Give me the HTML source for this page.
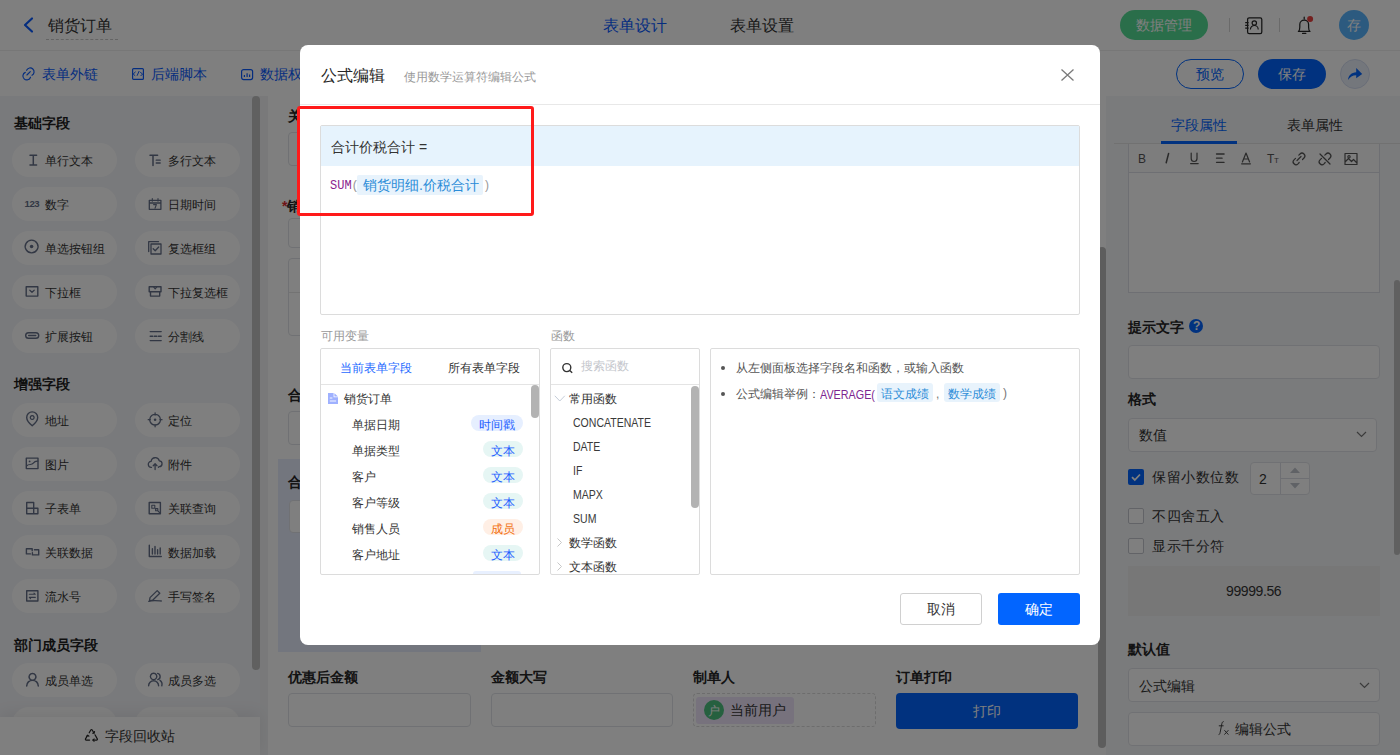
<!DOCTYPE html>
<html><head><meta charset="utf-8">
<style>
*{box-sizing:border-box;margin:0;padding:0}
html,body{width:1400px;height:755px;overflow:hidden;background:#fff;font-family:"Liberation Sans",sans-serif;color:#262626}
.a{position:absolute}
.t{position:absolute;white-space:nowrap}
.f12{font-size:12px;line-height:12px}
.f13{font-size:13px;line-height:13px}
.f14{font-size:14px;line-height:14px}
.f16{font-size:16px;line-height:16px}
.b{font-weight:bold}
svg{position:absolute;overflow:visible}
.pill{position:absolute;width:105px;height:34px;border-radius:17px;background:#fff}
.inp{position:absolute;border:1px solid #e1e3e8;border-radius:4px;background:#fff}
</style></head><body>
<div class="a" style="left:0px;top:0px;width:1400px;height:51px;background:#fff;border-bottom:1px solid #efefef"></div>
<svg style="left:22px;top:17px" width="12" height="16" viewBox="0 0 12 16"><path d="M10 1.5 L3 8 L10 14.5" fill="none" stroke="#0a5bff" stroke-width="2.2" stroke-linecap="round" stroke-linejoin="round"/></svg>
<div class="t f16" style="left:48px;top:18px;color:#333">销货订单</div>
<div class="a" style="left:46px;top:39px;width:72px;height:0px;border-top:1px dashed #c9c9c9"></div>
<div class="t f16" style="left:603px;top:18px;color:#0a5bff">表单设计</div>
<div class="t f16" style="left:730px;top:18px;color:#333">表单设置</div>
<div class="a" style="left:1120px;top:10px;width:88px;height:30px;border-radius:15px;background:#55dc95"></div>
<div class="t f14" style="left:1136px;top:18px;color:#fff">数据管理</div>
<div class="a" style="left:1229px;top:18px;width:1px;height:14px;background:#d4d4d4"></div>
<div class="a" style="left:1279px;top:18px;width:1px;height:14px;background:#d4d4d4"></div>
<svg style="left:1244px;top:16px" width="20" height="20" viewBox="0 0 20 20"><rect x="3.6" y="1.8" width="14.2" height="15.8" rx="1.6" fill="none" stroke="#262626" stroke-width="1.25"/><path d="M1.2 6.6h3.4M1.2 9.4h3.4M1.2 12.2h3.4" stroke="#262626" stroke-width="1.2"/><circle cx="10.3" cy="7" r="2.2" fill="none" stroke="#262626" stroke-width="1.2"/><path d="M6.4 13.4a3.9 3.9 0 0 1 7.8 0" fill="none" stroke="#262626" stroke-width="1.2"/></svg>
<svg style="left:1296px;top:15px" width="20" height="20" viewBox="0 0 20 20"><path d="M2.4 16.4c1.2-1 1.4-2.2 1.4-4.2V9.6a4.4 4.4 0 0 1 8.8 0v2.6c0 2 .2 3.2 1.4 4.2zM6.6 18.4h3.2M8.2 2.2v1.6" fill="none" stroke="#262626" stroke-width="1.25" stroke-linejoin="round" stroke-linecap="round"/><circle cx="14.1" cy="4" r="3" fill="#e8403f"/></svg>
<div class="a" style="left:1339px;top:10px;width:30px;height:30px;border-radius:15px;background:#58b5ff"></div>
<div class="t f14" style="left:1347px;top:18px;color:#fff">存</div>
<div class="a" style="left:0px;top:51px;width:1400px;height:45px;background:#fff"></div>
<div class="t f14" style="left:42px;top:67px;color:#0a5bff">表单外链</div>
<div class="t f14" style="left:151px;top:67px;color:#0a5bff">后端脚本</div>
<div class="t f14" style="left:260px;top:67px;color:#0a5bff">数据权限</div>
<div class="a" style="left:1176px;top:59px;width:68px;height:30px;border-radius:15px;border:1px solid #0265ff;background:#fff"></div>
<div class="t f14" style="left:1196px;top:67px;color:#0265ff">预览</div>
<div class="a" style="left:1258px;top:59px;width:68px;height:30px;border-radius:15px;background:#0265ff"></div>
<div class="t f14" style="left:1278px;top:67px;color:#fff">保存</div>
<div class="a" style="left:1340px;top:59px;width:30px;height:30px;border-radius:15px;border:1px solid #d3dcef;background:#e9eef9"></div>
<svg style="left:1347px;top:67px" width="16" height="14" viewBox="0 0 16 14"><path d="M1 13C1.5 8 4.5 5.5 9.2 5.2V1L15.2 7L9.2 11.2V8.2C5.5 8.2 3 9.8 1 13z" fill="#0265ff"/></svg>
<svg style="left:22px;top:67px" width="13" height="13" viewBox="0 0 13 13"><path d="M4.6 3.3A3.9 3.9 0 1 1 10 8.3M3.3 5.4A3.9 3.9 0 1 0 8.5 10.2M4.9 8L8.3 4.6" fill="none" stroke="#0a5bff" stroke-width="1.15" stroke-linecap="round"/></svg>
<svg style="left:132px;top:68px" width="12" height="12" viewBox="0 0 12 12"><rect x="0.6" y="0.6" width="10.8" height="10.8" rx="1" fill="none" stroke="#0a5bff" stroke-width="1.2"/><path d="M3.6 3.8L1.2 6L3.2 7.8M5 7.8L7.2 3M8.2 4.2L10.6 6L8.6 8" fill="none" stroke="#0a5bff" stroke-width="1"/></svg>
<svg style="left:241px;top:69px" width="12" height="11" viewBox="0 0 12 11"><rect x="0.6" y="0.6" width="11" height="10" rx="2" fill="none" stroke="#0a5bff" stroke-width="1.2"/><path d="M3.4 8V6M6.1 8V4.2M8.6 8V5.4" stroke="#0a5bff" stroke-width="1.2"/></svg>
<div class="a" style="left:0px;top:96px;width:260px;height:659px;background:#f3f4f8"></div>
<div class="a" style="left:260px;top:96px;width:8px;height:659px;background:#f2f3f5"></div>
<div class="a" style="left:252px;top:96px;width:8px;height:574px;border-radius:4px;background:#c0c0c0"></div>
<div class="t f14 b" style="left:14px;top:116px;color:#1f1f1f">基础字段</div>
<div class="t f14 b" style="left:14px;top:377px;color:#1f1f1f">增强字段</div>
<div class="t f14 b" style="left:14px;top:638px;color:#1f1f1f">部门成员字段</div>
<div class="pill" style="left:12px;top:143px"></div>
<div class="t f12" style="left:45px;top:155px;color:#333">单行文本</div>
<div class="pill" style="left:135px;top:143px"></div>
<div class="t f12" style="left:168px;top:155px;color:#333">多行文本</div>
<div class="pill" style="left:12px;top:187px"></div>
<div class="t f12" style="left:45px;top:199px;color:#333">数字</div>
<div class="pill" style="left:135px;top:187px"></div>
<div class="t f12" style="left:168px;top:199px;color:#333">日期时间</div>
<div class="pill" style="left:12px;top:231px"></div>
<div class="t f12" style="left:45px;top:243px;color:#333">单选按钮组</div>
<div class="pill" style="left:135px;top:231px"></div>
<div class="t f12" style="left:168px;top:243px;color:#333">复选框组</div>
<div class="pill" style="left:12px;top:275px"></div>
<div class="t f12" style="left:45px;top:287px;color:#333">下拉框</div>
<div class="pill" style="left:135px;top:275px"></div>
<div class="t f12" style="left:168px;top:287px;color:#333">下拉复选框</div>
<div class="pill" style="left:12px;top:319px"></div>
<div class="t f12" style="left:45px;top:331px;color:#333">扩展按钮</div>
<div class="pill" style="left:135px;top:319px"></div>
<div class="t f12" style="left:168px;top:331px;color:#333">分割线</div>
<div class="pill" style="left:12px;top:403px"></div>
<div class="t f12" style="left:45px;top:415px;color:#333">地址</div>
<div class="pill" style="left:135px;top:403px"></div>
<div class="t f12" style="left:168px;top:415px;color:#333">定位</div>
<div class="pill" style="left:12px;top:447px"></div>
<div class="t f12" style="left:45px;top:459px;color:#333">图片</div>
<div class="pill" style="left:135px;top:447px"></div>
<div class="t f12" style="left:168px;top:459px;color:#333">附件</div>
<div class="pill" style="left:12px;top:491px"></div>
<div class="t f12" style="left:45px;top:503px;color:#333">子表单</div>
<div class="pill" style="left:135px;top:491px"></div>
<div class="t f12" style="left:168px;top:503px;color:#333">关联查询</div>
<div class="pill" style="left:12px;top:535px"></div>
<div class="t f12" style="left:45px;top:547px;color:#333">关联数据</div>
<div class="pill" style="left:135px;top:535px"></div>
<div class="t f12" style="left:168px;top:547px;color:#333">数据加载</div>
<div class="pill" style="left:12px;top:579px"></div>
<div class="t f12" style="left:45px;top:591px;color:#333">流水号</div>
<div class="pill" style="left:135px;top:579px"></div>
<div class="t f12" style="left:168px;top:591px;color:#333">手写签名</div>
<div class="pill" style="left:12px;top:663px"></div>
<div class="t f12" style="left:45px;top:675px;color:#333">成员单选</div>
<div class="pill" style="left:135px;top:663px"></div>
<div class="t f12" style="left:168px;top:675px;color:#333">成员多选</div>
<div class="pill" style="left:12px;top:707px"></div>
<div class="t f12" style="left:45px;top:719px;color:#333">部门单选</div>
<div class="pill" style="left:135px;top:707px"></div>
<div class="t f12" style="left:168px;top:719px;color:#333">部门多选</div>
<svg style="left:0;top:0" width="260" height="755" viewBox="0 0 260 755"><path d="M30 155.2h6.6M30 165h6.6M33.3 155.2v9.8" fill="none" stroke="#646f88" stroke-width="1.5" stroke-linecap="round" stroke-linejoin="round"/><path d="M150 155.3h7.6M153 155.3v10.2" fill="none" stroke="#646f88" stroke-width="1.5" stroke-linecap="round" stroke-linejoin="round"/><path d="M156.2 160.2h4M156.2 163h4" fill="none" stroke="#646f88" stroke-width="1.3" stroke-linecap="round" stroke-linejoin="round"/><text x="24.6" y="207" font-family="Liberation Sans" font-weight="bold" font-size="9.6" letter-spacing="-0.5" fill="#646f88">123</text><path d="M149.3 200.3h11.6v9h-11.6zM149.3 203h11.6" fill="none" stroke="#646f88" stroke-width="1.3" stroke-linecap="round" stroke-linejoin="round"/><path d="M152.3 198.5v2.8M158 198.5v2.8M153.6 204.6h2.8l-1.4 3.6" fill="none" stroke="#646f88" stroke-width="1.1" stroke-linecap="round" stroke-linejoin="round"/><path d="M31.6 240.1a6.4 6.4 0 1 0 .01 0z" fill="none" stroke="#646f88" stroke-width="1.4" stroke-linecap="round" stroke-linejoin="round"/><circle cx="31.6" cy="246.5" r="1.8" fill="#646f88"/><path d="M151 244h10v10h-10zM148.7 251.5v-9.8h9.8" fill="none" stroke="#646f88" stroke-width="1.3" stroke-linecap="round" stroke-linejoin="round"/><path d="M153.2 248.8l2 2 3.5-3.8" fill="none" stroke="#646f88" stroke-width="1.3" stroke-linecap="round" stroke-linejoin="round"/><path d="M26.2 286.7h11.6v9.4h-11.6z" fill="none" stroke="#646f88" stroke-width="1.4" stroke-linecap="round" stroke-linejoin="round"/><path d="M29.8 290.2l2.2 2.1 2.2-2.1" fill="none" stroke="#646f88" stroke-width="1.2" stroke-linecap="round" stroke-linejoin="round"/><path d="M149.2 286.7h11.8v5h-11.8zM150.5 291.7v4.4h9.2v-4.4" fill="none" stroke="#646f88" stroke-width="1.4" stroke-linecap="round" stroke-linejoin="round"/><path d="M153.8 287.2l1.4 1.6 1.4-1.6" fill="none" stroke="#646f88" stroke-width="1.2" stroke-linecap="round" stroke-linejoin="round"/><path d="M28.5 332.7h7.4a2.8 2.8 0 0 1 0 5.6h-7.4a2.8 2.8 0 0 1 0-5.6z" fill="none" stroke="#646f88" stroke-width="1.4" stroke-linecap="round" stroke-linejoin="round"/><path d="M28.6 335.5h7.2" fill="none" stroke="#646f88" stroke-width="1.3" stroke-linecap="round" stroke-linejoin="round"/><path d="M150.2 331.6h11M150.2 340.6h11M150.2 336.2h2.5M154.3 336.2h2.5M158.4 336.2h2.8" fill="none" stroke="#646f88" stroke-width="1.4" stroke-linecap="round" stroke-linejoin="round"/><path d="M32.2 425.7s-5.5-4.6-5.5-8.3a5.5 5.5 0 0 1 11 0c0 3.7-5.5 8.3-5.5 8.3z" fill="none" stroke="#646f88" stroke-width="1.4" stroke-linecap="round" stroke-linejoin="round"/><path d="M32.2 415.6a1.9 1.9 0 1 0 .01 0z" fill="none" stroke="#646f88" stroke-width="1.3" stroke-linecap="round" stroke-linejoin="round"/><path d="M155.1 414.3a5.4 5.4 0 1 0 .01 0zM155.1 412.8v2.2M155.1 424.6v2.2M148.2 419.7h2.2M159.8 419.7h2.2" fill="none" stroke="#646f88" stroke-width="1.3" stroke-linecap="round" stroke-linejoin="round"/><circle cx="155.1" cy="419.7" r="1.3" fill="#646f88"/><path d="M26.3 458.1h11.7v10.5h-11.7z" fill="none" stroke="#646f88" stroke-width="1.4" stroke-linecap="round" stroke-linejoin="round"/><path d="M26.5 466c2.5-2.8 5-.3 6.8-2.8 1.2-1.6 2.8-2.2 4.5-2" fill="none" stroke="#646f88" stroke-width="1.2" stroke-linecap="round" stroke-linejoin="round"/><circle cx="29.6" cy="461.4" r="0.9" fill="#646f88"/><path d="M151.5 467.3a3 3 0 0 1-.4-6 4.2 4.2 0 0 1 8.2-.5 2.9 2.9 0 0 1-.3 5.8l-.6.7M155.1 469.5v-5.6M153.2 465.7l1.9-1.9 1.9 1.9" fill="none" stroke="#646f88" stroke-width="1.3" stroke-linecap="round" stroke-linejoin="round"/><path d="M26.7 502.5h7v11.3h-7zM26.7 508.2h7M33.7 508.2h4.2v5.6h-4.2" fill="none" stroke="#646f88" stroke-width="1.4" stroke-linecap="round" stroke-linejoin="round"/><path d="M149.2 502.5h11.2v11.3h-11.2z" fill="none" stroke="#646f88" stroke-width="1.4" stroke-linecap="round" stroke-linejoin="round"/><path d="M151.8 505.2h3v3h-3zM155.6 508.6h2.2v2.2h-2.2zM158 511l1.6 1.6" fill="none" stroke="#646f88" stroke-width="1.1" stroke-linecap="round" stroke-linejoin="round"/><path d="M32.2 550.8v-2.1h-5.8v5.2h4M32.4 552.8v2.1h6.3v-5.2h-4.3" fill="none" stroke="#646f88" stroke-width="1.4" stroke-linecap="round" stroke-linejoin="round"/><path d="M149.3 545.2v11.3h12M152.4 554v-5.2M155 554v-7.5M157.6 554v-4.2M160.2 554v-6" fill="none" stroke="#646f88" stroke-width="1.4" stroke-linecap="round" stroke-linejoin="round"/><path d="M26.7 590.7h11.2v10.3h-11.2z" fill="none" stroke="#646f88" stroke-width="1.4" stroke-linecap="round" stroke-linejoin="round"/><path d="M29.3 594.3h6l-1.3-1.2M35.3 597.4h-6l1.3 1.2" fill="none" stroke="#646f88" stroke-width="1.1" stroke-linecap="round" stroke-linejoin="round"/><path d="M149.5 600.8l.5-3.2 7.2-7 2.6 2.6-7.2 7zM148.8 601.4c4-1.5 8.5-.8 12.5-.4" fill="none" stroke="#646f88" stroke-width="1.3" stroke-linecap="round" stroke-linejoin="round"/><path d="M32.5 673.4a3.4 3.4 0 1 0 .01 0zM26.7 686a5.8 5.8 0 0 1 11.6 0" fill="none" stroke="#646f88" stroke-width="1.5" stroke-linecap="round" stroke-linejoin="round"/><path d="M153.6 673.2a3.2 3.2 0 1 0 .01 0zM148.6 685.8a5 5 0 0 1 10 0M157.6 673.4a3.2 3.2 0 0 1 .2 6.2M160 680.4a5 5 0 0 1 1.8 5.4" fill="none" stroke="#646f88" stroke-width="1.4" stroke-linecap="round" stroke-linejoin="round"/></svg>
<div class="a" style="left:0px;top:717px;width:260px;height:38px;background:#fff;box-shadow:0 -4px 16px rgba(0,0,0,.07)"></div>
<div class="t f14" style="left:105px;top:729px;color:#333">字段回收站</div>
<svg style="left:84px;top:728px" width="15" height="14" viewBox="0 0 15 14"><path d="M5.2 4.8L6.8 2a.8.8 0 0 1 1.4 0l1.6 2.8M11 6.8l2.3 4.1a.8.8 0 0 1-.7 1.2H9M5.6 12.1H2.2a.8.8 0 0 1-.7-1.2L3.5 7.5" fill="none" stroke="#262626" stroke-width="1.2" stroke-linecap="round"/><path d="M8.2 5.2l2 0 .4-2M2.2 8.6l1.5-1.3 1.6 1.2M10.5 10.6l-1.6 1.5 1.5 1.5" fill="none" stroke="#262626" stroke-width="1.1"/></svg>
<div class="a" style="left:268px;top:96px;width:838px;height:659px;background:#fff"></div>
<div class="t f14 b" style="left:288px;top:109px;color:#262626">关联单据编号</div>
<div class="inp" style="left:288px;top:132px;width:183px;height:34px"></div>
<div class="t f14 b" style="left:282px;top:199px;color:#262626"><span style="color:#e0282e">*</span>销售订单号</div>
<div class="inp" style="left:288px;top:218px;width:183px;height:30px"></div>
<div class="inp" style="left:288px;top:258px;width:400px;height:78px"></div>
<div class="a" style="left:289px;top:292px;width:398px;height:1px;background:#e6e6e6"></div>
<div class="t f14 b" style="left:288px;top:388px;color:#262626">合计金额</div>
<div class="inp" style="left:288px;top:411px;width:183px;height:34px"></div>
<div class="a" style="left:278px;top:459px;width:203px;height:193px;background:#e6ecfd"></div>
<div class="t f14 b" style="left:288px;top:475px;color:#262626">合计价税合计</div>
<div class="inp" style="left:289px;top:500px;width:182px;height:33px"></div>
<div class="t f14 b" style="left:288px;top:670px;color:#262626">优惠后金额</div>
<div class="t f14 b" style="left:491px;top:670px;color:#262626">金额大写</div>
<div class="t f14 b" style="left:693px;top:670px;color:#262626">制单人</div>
<div class="t f14 b" style="left:896px;top:670px;color:#262626">订单打印</div>
<div class="inp" style="left:288px;top:693px;width:183px;height:34px"></div>
<div class="inp" style="left:491px;top:693px;width:182px;height:34px"></div>
<div class="a" style="left:693px;top:693px;width:183px;height:34px;border:1px dashed #dadada;border-radius:4px"></div>
<div class="a" style="left:696px;top:697px;width:98px;height:27px;background:#efe5fb;border-radius:3px"></div>
<div class="a" style="left:704px;top:700px;width:20px;height:20px;border-radius:10px;background:#4cc07e"></div>
<div class="t f12" style="left:708px;top:705px;color:#fff">户</div>
<div class="t f14" style="left:730px;top:703px;color:#333">当前用户</div>
<div class="a" style="left:896px;top:693px;width:182px;height:36px;background:#0265ff;border-radius:4px"></div>
<div class="t f14" style="left:973px;top:704px;color:#fff">打印</div>
<div class="a" style="left:1098px;top:247px;width:8px;height:501px;border-radius:4px;background:#bababa"></div>
<div class="a" style="left:1106px;top:96px;width:294px;height:659px;background:#f5f6f9"></div>
<div class="t f14" style="left:1171px;top:118px;color:#0265ff">字段属性</div>
<div class="t f14" style="left:1287px;top:118px;color:#333">表单属性</div>
<div class="a" style="left:1114px;top:143px;width:286px;height:1px;background:#e3e3e3"></div>
<div class="a" style="left:1161px;top:141px;width:76px;height:3px;background:#0265ff"></div>
<div class="a" style="left:1128px;top:144px;width:252px;height:149px;border:1px solid #dcdfe6;border-top:none;background:#fff"></div>
<div class="a" style="left:1129px;top:144px;width:250px;height:29px;background:#fafafa;border-bottom:1px solid #dcdfe6"></div>
<svg style="left:1138px;top:152px" width="14" height="14" viewBox="0 0 14 14"><text x="0" y="11" font-family="Liberation Sans" font-size="12" fill="#555">B</text></svg>
<svg style="left:1163px;top:152px" width="14" height="14" viewBox="0 0 14 14"><path d="M5.6 1.5L3.2 10.8" fill="none" stroke="#555" stroke-width="1.5" stroke-linecap="round" stroke-linejoin="round"/></svg>
<svg style="left:1189px;top:152px" width="14" height="14" viewBox="0 0 14 14"><path d="M2.2 1v5.6a2.9 2.9 0 0 0 5.8 0V1M1.6 11.6h7.6" fill="none" stroke="#555" stroke-width="1.2" stroke-linecap="round" stroke-linejoin="round"/></svg>
<svg style="left:1215px;top:152px" width="14" height="14" viewBox="0 0 14 14"><path d="M1.5 2h7.6M1.5 6.2h5.6M1.5 10.3h7.6" fill="none" stroke="#555" stroke-width="1.3" stroke-linecap="round" stroke-linejoin="round"/></svg>
<svg style="left:1241px;top:152px" width="14" height="14" viewBox="0 0 14 14"><path d="M1.4 10l3.6-9 3.6 9M2.6 7h4.8M0.6 11.8h8.8" fill="none" stroke="#555" stroke-width="1.2" stroke-linecap="round" stroke-linejoin="round"/></svg>
<svg style="left:1267px;top:152px" width="14" height="14" viewBox="0 0 14 14"><text x="0" y="11" font-family="Liberation Sans" font-size="12" fill="#555">T</text><text x="7" y="11" font-family="Liberation Sans" font-size="8" fill="#555">T</text></svg>
<svg style="left:1292px;top:152px" width="14" height="14" viewBox="0 0 14 14"><path d="M5 8.5l4-4M6.8 3.2l1.2-1.2a2.8 2.8 0 0 1 4 4l-1.5 1.5M7.2 10.5L6 11.8a2.8 2.8 0 0 1-4-4l1.5-1.5" fill="none" stroke="#555" stroke-width="1.2" stroke-linecap="round" stroke-linejoin="round"/></svg>
<svg style="left:1318px;top:152px" width="14" height="14" viewBox="0 0 14 14"><path d="M6.8 3.2l1.2-1.2a2.8 2.8 0 0 1 4 4l-1.5 1.5M7.2 10.5L6 11.8a2.8 2.8 0 0 1-4-4l1.5-1.5M2 2l10 10" fill="none" stroke="#555" stroke-width="1.2" stroke-linecap="round" stroke-linejoin="round"/></svg>
<svg style="left:1344px;top:152px" width="14" height="14" viewBox="0 0 14 14"><path d="M1 1.5h12v11H1zM1 10l3.5-3.5 3 3 2-2 3.5 3.5" fill="none" stroke="#555" stroke-width="1.2" stroke-linecap="round" stroke-linejoin="round"/><circle cx="5" cy="4.8" r="1.2" fill="none" stroke="#555" stroke-width="1.1"/></svg>
<div class="t f14 b" style="left:1128px;top:320px;color:#262626">提示文字</div>
<div class="a" style="left:1189px;top:319px;width:14px;height:14px;border-radius:7px;background:#0265ff"></div>
<div class="t f12 b" style="left:1193px;top:320px;color:#fff">?</div>
<div class="inp" style="left:1128px;top:345px;width:252px;height:34px"></div>
<div class="t f14 b" style="left:1128px;top:392px;color:#262626">格式</div>
<div class="inp" style="left:1128px;top:418px;width:249px;height:34px"></div>
<div class="t f14" style="left:1139px;top:428px;color:#333">数值</div>
<svg style="left:1356px;top:431px" width="11" height="7" viewBox="0 0 11 7"><path d="M1 1l4.5 4.5L10 1" fill="none" stroke="#777" stroke-width="1.2"/></svg>
<div class="a" style="left:1128px;top:469px;width:16px;height:16px;background:#0265ff;border-radius:2px"></div>
<svg style="left:1130px;top:471px" width="12" height="12" viewBox="0 0 12 12"><path d="M2 6.2l2.8 2.8L10 3.5" fill="none" stroke="#fff" stroke-width="1.8"/></svg>
<div class="t f14" style="left:1152px;top:470px;color:#333;letter-spacing:.6px">保留小数位数</div>
<div class="inp" style="left:1250px;top:462px;width:60px;height:33px"></div>
<div class="a" style="left:1280px;top:463px;width:1px;height:31px;background:#dcdfe6"></div>
<div class="a" style="left:1281px;top:478px;width:28px;height:1px;background:#dcdfe6"></div>
<div class="t f14" style="left:1259px;top:472px;color:#333">2</div>
<svg style="left:1290px;top:467px" width="10" height="6" viewBox="0 0 10 6"><path d="M0 6L5 0.5L10 6z" fill="#c0c4cc"/></svg>
<svg style="left:1290px;top:483px" width="10" height="6" viewBox="0 0 10 6"><path d="M0 0L5 5.5L10 0z" fill="#c0c4cc"/></svg>
<div class="a" style="left:1128px;top:508px;width:16px;height:16px;border:1px solid #c4c7cf;border-radius:2px;background:#fff"></div>
<div class="t f14" style="left:1152px;top:509px;color:#333;letter-spacing:.6px">不四舍五入</div>
<div class="a" style="left:1128px;top:538px;width:16px;height:16px;border:1px solid #c4c7cf;border-radius:2px;background:#fff"></div>
<div class="t f14" style="left:1152px;top:539px;color:#333;letter-spacing:.6px">显示千分符</div>
<div class="a" style="left:1128px;top:566px;width:252px;height:50px;background:#efefef"></div>
<div class="t f14" style="left:1226px;top:584px;color:#333;letter-spacing:-.4px">99999.56</div>
<div class="t f14 b" style="left:1128px;top:642px;color:#262626">默认值</div>
<div class="inp" style="left:1128px;top:668px;width:252px;height:34px"></div>
<div class="t f14" style="left:1139px;top:679px;color:#333">公式编辑</div>
<svg style="left:1359px;top:682px" width="11" height="7" viewBox="0 0 11 7"><path d="M1 1l4.5 4.5L10 1" fill="none" stroke="#777" stroke-width="1.2"/></svg>
<div class="inp" style="left:1128px;top:712px;width:252px;height:34px"></div>
<svg style="left:1216px;top:720px" width="16" height="16" viewBox="0 0 16 16"><path d="M2.6 14.6c.8 0 1.2-.5 1.5-2l1.8-9c.3-1.4.8-2 1.8-2" fill="none" stroke="#444" stroke-width="1"/><path d="M2.8 5.8h4.8M8.4 10.2l4 4.4M12.4 10.2l-4 4.4" fill="none" stroke="#444" stroke-width="1"/></svg>
<div class="t f14" style="left:1235px;top:722px;color:#333">编辑公式</div>
<div class="a" style="left:1394px;top:280px;width:6px;height:275px;border-radius:3px;background:#c1c1c1"></div>
<div class="a" style="left:0px;top:0px;width:1400px;height:755px;background:rgba(0,0,0,.5)"></div>
<div class="a" style="left:300px;top:45px;width:800px;height:600px;background:#fff;border-radius:8px"></div>
<div class="t f16" style="left:321px;top:68px;color:#262626">公式编辑</div>
<div class="t f12" style="left:404px;top:71px;color:#999">使用数学运算符编辑公式</div>
<svg style="left:1061px;top:69px" width="13" height="12" viewBox="0 0 13 12"><path d="M0.5 0.5L12.5 11.5M12.5 0.5L0.5 11.5" fill="none" stroke="#7a7a7a" stroke-width="1.3"/></svg>
<div class="a" style="left:300px;top:104px;width:800px;height:1px;background:#e8e8e8"></div>
<div class="a" style="left:320px;top:125px;width:760px;height:190px;border:1px solid #dcdcdc;border-radius:2px;background:#fff"></div>
<div class="a" style="left:321px;top:126px;width:758px;height:40px;background:#e6f3fd"></div>
<div class="t f14" style="left:331px;top:140px;color:#333">合计价税合计 =</div>
<div class="t" style="left:330px;top:180px;font-family:Liberation Mono;font-size:12px;line-height:12px;color:#8b1e8f">SUM<span style="color:#999">(</span></div>
<div class="a" style="left:357px;top:175px;width:126px;height:20px;background:#e8f3fc;border-radius:2px"></div>
<div class="t f14" style="left:363px;top:178px;color:#2d8dd8">销货明细.价税合计</div>
<div class="t f12" style="left:485px;top:179px;color:#999">)</div>
<div class="t f12" style="left:321px;top:330px;color:#999">可用变量</div>
<div class="t f12" style="left:551px;top:330px;color:#999">函数</div>
<div class="a" style="left:320px;top:348px;width:220px;height:227px;border:1px solid #dcdcdc;border-radius:2px;background:#fff"></div>
<div class="t f12" style="left:340px;top:362px;color:#1f6bff">当前表单字段</div>
<div class="t f12" style="left:448px;top:362px;color:#333">所有表单字段</div>
<div class="a" style="left:321px;top:384px;width:218px;height:1px;background:#e4e4e4"></div>
<svg style="left:328px;top:393px" width="10" height="11" viewBox="0 0 10 11"><path d="M0 0h5.6v4.3H10V11H0z" fill="#9fb1ff"/><path d="M6.4 0.2L10 3.6H6.4z" fill="#9fb1ff"/><path d="M1.8 5h2.6M1.8 8h6.3" stroke="#fff" stroke-width="0.9"/></svg>
<div class="t f12" style="left:344px;top:393px;color:#333">销货订单</div>
<div class="t f12" style="left:352px;top:419px;color:#333">单据日期</div>
<div class="a" style="left:471px;top:415px;width:52px;height:16px;background:#e6efff;border-radius:8px"></div>
<div class="t f12" style="left:479px;top:419px;color:#1f5fff">时间戳</div>
<div class="t f12" style="left:352px;top:445px;color:#333">单据类型</div>
<div class="a" style="left:483px;top:441px;width:40px;height:16px;background:#e6f6f4;border-radius:8px"></div>
<div class="t f12" style="left:491px;top:445px;color:#1f5fff">文本</div>
<div class="t f12" style="left:352px;top:471px;color:#333">客户</div>
<div class="a" style="left:483px;top:467px;width:40px;height:16px;background:#e6f6f4;border-radius:8px"></div>
<div class="t f12" style="left:491px;top:471px;color:#1f5fff">文本</div>
<div class="t f12" style="left:352px;top:497px;color:#333">客户等级</div>
<div class="a" style="left:483px;top:493px;width:40px;height:16px;background:#e6f6f4;border-radius:8px"></div>
<div class="t f12" style="left:491px;top:497px;color:#1f5fff">文本</div>
<div class="t f12" style="left:352px;top:523px;color:#333">销售人员</div>
<div class="a" style="left:483px;top:519px;width:40px;height:16px;background:#ffefe5;border-radius:8px"></div>
<div class="t f12" style="left:491px;top:523px;color:#f2700f">成员</div>
<div class="t f12" style="left:352px;top:549px;color:#333">客户地址</div>
<div class="a" style="left:483px;top:545px;width:40px;height:16px;background:#e6f6f4;border-radius:8px"></div>
<div class="t f12" style="left:491px;top:549px;color:#1f5fff">文本</div>
<div class="a" style="left:473px;top:571px;width:48px;height:3px;background:#e8f0ff;border-radius:8px 8px 0 0"></div>
<div class="a" style="left:531px;top:385px;width:8px;height:33px;background:#b3b3b3;border-radius:4px"></div>
<div class="a" style="left:550px;top:348px;width:150px;height:227px;border:1px solid #dcdcdc;border-radius:2px;background:#fff"></div>
<svg style="left:562px;top:363px" width="11" height="10" viewBox="0 0 11 10"><circle cx="4.8" cy="4.6" r="4" fill="none" stroke="#333" stroke-width="1.4"/><path d="M7.8 7.6l2.4 2.2" stroke="#333" stroke-width="1.4"/></svg>
<div class="t f12" style="left:581px;top:360px;color:#c4c6cc">搜索函数</div>
<div class="a" style="left:551px;top:384px;width:148px;height:1px;background:#e4e4e4"></div>
<svg style="left:554px;top:395px" width="12" height="7" viewBox="0 0 12 7"><path d="M0.8 0.8L5.8 6L10.8 0.8" fill="none" stroke="#c5cdd9" stroke-width="1"/></svg>
<div class="t f12" style="left:569px;top:393px;color:#333">常用函数</div>
<div class="t" style="left:573px;top:416px;font-size:12.4px;line-height:14px;color:#3a3a3a;transform:scaleX(0.85);transform-origin:0 0">CONCATENATE</div>
<div class="t" style="left:573px;top:440px;font-size:12.4px;line-height:14px;color:#3a3a3a;transform:scaleX(0.85);transform-origin:0 0">DATE</div>
<div class="t" style="left:573px;top:464px;font-size:12.4px;line-height:14px;color:#3a3a3a;transform:scaleX(0.85);transform-origin:0 0">IF</div>
<div class="t" style="left:573px;top:488px;font-size:12.4px;line-height:14px;color:#3a3a3a;transform:scaleX(0.85);transform-origin:0 0">MAPX</div>
<div class="t" style="left:573px;top:512px;font-size:12.4px;line-height:14px;color:#3a3a3a;transform:scaleX(0.85);transform-origin:0 0">SUM</div>
<svg style="left:557px;top:538px" width="5" height="9" viewBox="0 0 5 9"><path d="M0.5 0.5L4.5 4.5L0.5 8.5" fill="none" stroke="#c8c8c8" stroke-width="1"/></svg>
<div class="t f12" style="left:569px;top:537px;color:#333">数学函数</div>
<svg style="left:557px;top:562px" width="5" height="9" viewBox="0 0 5 9"><path d="M0.5 0.5L4.5 4.5L0.5 8.5" fill="none" stroke="#c8c8c8" stroke-width="1"/></svg>
<div class="a" style="left:551px;top:555px;width:140px;height:19px;overflow:hidden"><div class="t f12" style="left:18px;top:6px;color:#333">文本函数</div></div>
<div class="a" style="left:691px;top:386px;width:8px;height:122px;background:#b3b3b3;border-radius:4px"></div>
<div class="a" style="left:710px;top:348px;width:370px;height:227px;border:1px solid #dcdcdc;border-radius:2px;background:#fff"></div>
<div class="a" style="left:721px;top:366px;width:4px;height:4px;border-radius:2px;background:#555"></div>
<div class="t f12" style="left:736px;top:362px;color:#555">从左侧面板选择字段名和函数，或输入函数</div>
<div class="a" style="left:721px;top:392px;width:4px;height:4px;border-radius:2px;background:#555"></div>
<div class="t f12" style="left:736px;top:388px;color:#555">公式编辑举例：</div>
<div class="t" style="left:820px;top:388px;font-size:12.4px;line-height:14px;color:#7d2590;transform:scaleX(0.87);transform-origin:0 0">AVERAGE(</div>
<div class="a" style="left:877px;top:383px;width:56px;height:19px;background:#e8f3fc;border-radius:3px"></div>
<div class="t f12" style="left:881px;top:388px;color:#2d8dd8">语文成绩</div>
<div class="t f12" style="left:936px;top:388px;color:#777">,</div>
<div class="a" style="left:944px;top:383px;width:56px;height:19px;background:#e8f3fc;border-radius:3px"></div>
<div class="t f12" style="left:948px;top:388px;color:#2d8dd8">数学成绩</div>
<div class="t f12" style="left:1003px;top:387px;color:#777">)</div>
<div class="a" style="left:900px;top:593px;width:82px;height:32px;border:1px solid #d0d0d0;border-radius:3px;background:#fff"></div>
<div class="t f14" style="left:927px;top:602px;color:#333">取消</div>
<div class="a" style="left:998px;top:593px;width:82px;height:32px;border-radius:3px;background:#0265ff"></div>
<div class="t f14" style="left:1025px;top:602px;color:#fff">确定</div>
<div class="a" style="left:297px;top:106px;width:237px;height:110px;border:3px solid #ff1a1a;border-radius:3px"></div>
</body></html>
